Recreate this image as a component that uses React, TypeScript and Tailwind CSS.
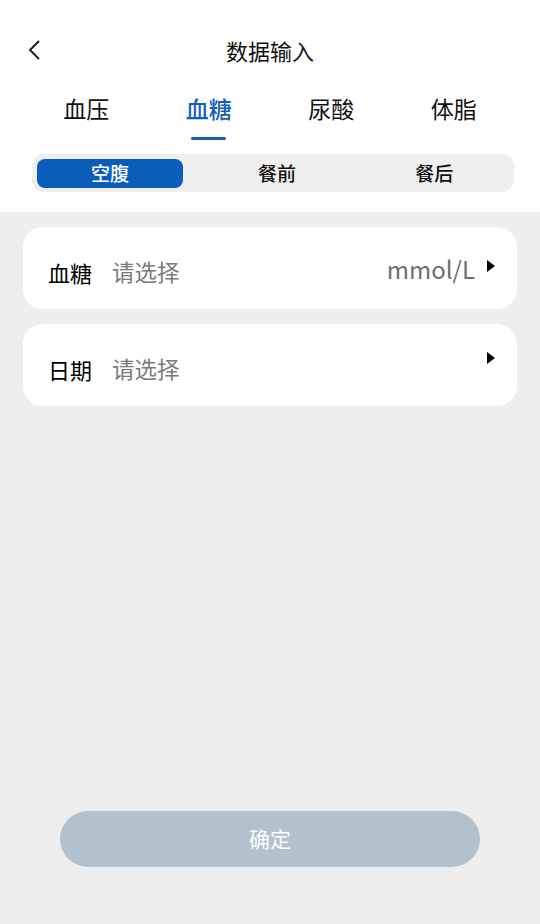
import React from "react";

const tabs = ["血压", "血糖", "尿酸", "体脂"];
const segs = ["空腹", "餐前", "餐后"];

const Row = ({ label, unit }: { label: string; unit?: string }) => (
  <div className="relative flex h-[82px] items-center rounded-[20px] bg-white pl-[25px] pr-[22px]">
    <span className="pt-[8px] text-[22px] text-black">{label}</span>
    <span className="ml-[20px] pt-[8px] text-[22.5px] text-[#7a7a7a]">请选择</span>
    <div className="ml-auto flex items-center gap-[12px] self-start pt-[28px]">
      {unit && <span className="text-[24px] leading-[28px] text-[#6e6e6e]">{unit}</span>}
      <svg width="8" height="12" viewBox="0 0 8 12" className="mb-[6px]">
        <path d="M0 0 L8 6 L0 12 Z" fill="#000" />
      </svg>
    </div>
  </div>
);

export default function App() {
  return (
    <div
      className="flex h-[924px] w-[540px] flex-col bg-[#eeeeee]"
      style={{ fontFamily: '"Noto Sans CJK SC", "Noto Sans", sans-serif' }}
    >
      <div className="bg-white pb-[20px]">
        <div className="relative flex h-[52px] items-end justify-center pt-[34px]">
          <svg className="absolute left-[27px] top-[40px]" width="14" height="20" viewBox="0 0 14 20">
            <path d="M12 1 L3 10 L12 19" fill="none" stroke="#111" strokeWidth="1.8" />
          </svg>
        </div>
        <div className="-mt-[17px] flex justify-center">
          <span className="text-[22px] leading-[30px] text-[#111]">数据输入</span>
        </div>
        <div className="mt-[27px] flex px-[25px]">
          {tabs.map((t, i) => (
            <div key={t} className="flex flex-1 flex-col items-center">
              <span
                className={`text-[23px] leading-[32px] ${i === 1 ? "font-medium text-[#1560b3]" : "text-[#111]"}`}
              >
                {t}
              </span>
              <div className={`mt-[13px] h-[3px] w-[35px] rounded-full ${i === 1 ? "bg-[#1560b3]" : "bg-transparent"}`} />
            </div>
          ))}
        </div>
        <div className="ml-[32px] mr-[26px] mt-[14px] flex h-[38px] items-center rounded-[12px] bg-[#efefef] px-[5px]">
          {segs.map((s, i) => (
            <div key={s} className="flex flex-1 justify-start">
              <div
                className={`flex h-[29px] items-center justify-center rounded-[8px] text-[19px] font-medium ${
                  i === 0 ? "w-[146px] bg-[#0a5db8] text-white" : "w-full pl-[8px] text-[#111]"
                }`}
              >
                {s}
              </div>
            </div>
          ))}
        </div>
      </div>
      <div className="mt-[15px] flex flex-col gap-[15px] px-[23px]">
        <Row label="血糖" unit="mmol/L" />
        <Row label="日期" />
      </div>
      <div className="mt-auto mb-[57px] flex justify-center">
        <button className="h-[56px] w-[420px] rounded-[28px] bg-[#b3c1cc] text-[21px] text-white">确定</button>
      </div>
    </div>
  );
}
